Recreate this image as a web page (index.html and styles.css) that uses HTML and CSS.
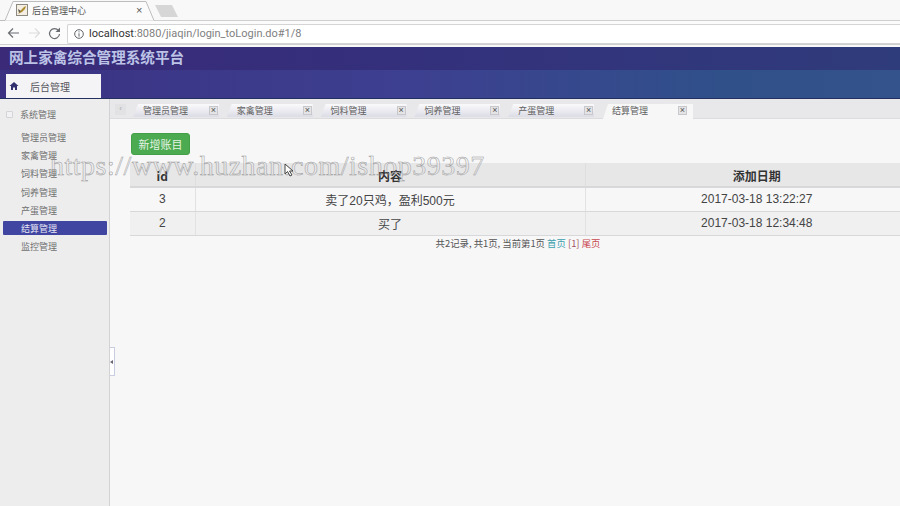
FILE: index.html
```html
<!DOCTYPE html>
<html lang="zh">
<head>
<meta charset="utf-8">
<title>后台管理中心</title>
<link rel="stylesheet" href="styles.css">
</head>
<body>
<div class="browser">
  <div class="tabstrip">
    <svg class="tabshape" width="182" height="22" viewBox="0 0 182 22">
      <path d="M0 20.5H5L13 1.5H146L154 20.5" fill="#fbfbfb" stroke="#bdbdbd" stroke-width="1"/>
      <path d="M155 5H172L178 17H161Z" fill="#d6d6d6"/>
    </svg>
    <svg class="favicon" width="12" height="12" viewBox="0 0 12 12">
      <rect x="0.5" y="0.5" width="11" height="11" fill="#f4efe2" stroke="#8c8a80"/>
      <path d="M2 10L6 5L8 3L10 2L9 5L6 8Z" fill="#b08c30"/>
      <path d="M2 5L5 7L3 9Z" fill="#5d5a4c"/>
    </svg>
    <span class="tabtitle">后台管理中心</span>
    <span class="tabclose">×</span>
  </div>
  <div class="toolbar">
    <svg class="navicons" width="62" height="16" viewBox="0 0 62 16">
      <path d="M13 8H3M7 3.500L2.500 8L7 12.500" fill="none" stroke="#6a6d72" stroke-width="1.200"/>
      <path d="M23 8H33M29 3.500L33.500 8L29 12.500" fill="none" stroke="#dcdcdc" stroke-width="1.200"/>
      <path d="M52.500 5.500A5 5 0 1 0 53.500 9" fill="none" stroke="#6a6d72" stroke-width="1.200"/>
      <path d="M54 2.500V7H49.500Z" fill="#6a6d72"/>
    </svg>
    <div class="omnibox">
      <svg class="infoicon" width="10" height="10" viewBox="0 0 10 10">
        <circle cx="5" cy="5" r="4.300" fill="none" stroke="#5f6368"/>
        <path d="M5 4.300V7.600M5 2.300V3.400" stroke="#5f6368"/>
      </svg>
      <span class="url"><b class="host">localhost</b>:8080/jiaqin/login_toLogin.do#1/8</span>
    </div>
  </div>
</div>

<header class="banner">
  <div class="brand">网上家禽综合管理系统平台</div>
  <nav class="topnav">
    <div class="topnav-item">
      <svg class="homeicon" width="10" height="10" viewBox="0 0 10 10">
        <path d="M5 1L0.500 5H2V9H4V6.500H6V9H8V5H9.500Z" fill="#33306f"/>
      </svg>
      <span>后台管理</span>
    </div>
  </nav>
</header>

<div class="workspace">
  <aside class="sidebar">
    <div class="side-title"><span class="side-check"></span>系统管理</div>
    <ul class="side-list">
      <li>管理员管理</li>
      <li>家禽管理</li>
      <li>饲料管理</li>
      <li>饲养管理</li>
      <li>产蛋管理</li>
      <li class="active">结算管理</li>
      <li>监控管理</li>
    </ul>
  </aside>
  <span class="collapse"><i></i></span>
  <main class="content">
    <div class="tabs">
      <span class="tabs-scroll">‹</span>
      <div class="tab"><span>管理员管理</span><em>×</em></div>
      <div class="tab"><span>家禽管理</span><em>×</em></div>
      <div class="tab"><span>饲料管理</span><em>×</em></div>
      <div class="tab"><span>饲养管理</span><em>×</em></div>
      <div class="tab"><span>产蛋管理</span><em>×</em></div>
      <div class="tab current"><span>结算管理</span><em>×</em></div>
    </div>
    <div class="panel">
      <button class="add-btn" type="button">新增账目</button>
      <div class="table-clip">
        <table class="grid">
          <thead>
            <tr><th class="c-id">id</th><th class="c-text">内容</th><th class="c-date">添加日期</th></tr>
          </thead>
          <tbody>
            <tr><td>3</td><td>卖了20只鸡，盈利500元</td><td>2017-03-18 13:22:27</td></tr>
            <tr class="alt"><td>2</td><td>买了</td><td>2017-03-18 12:34:48</td></tr>
          </tbody>
        </table>
      </div>
      <p class="pager">共2记录, 共1页, 当前第1页 <a class="first">首页</a> <a class="num">[1]</a> <a class="last">尾页</a></p>
    </div>
  </main>
</div>

<div class="watermark">https://www.huzhan.com/ishop39397</div>
<svg class="cursor" width="10" height="14" viewBox="0 0 10 14">
  <path d="M1 1L1 11L3.500 8.500L6 13L8 12L5.500 8L9 8Z" fill="#fff" stroke="#444"/>
</svg>
</body>
</html>
```

FILE: styles.css
```css
* { box-sizing: border-box; }
html, body { margin: 0; height: 100%; }
body {
  width: 900px;
  height: 506px;
  overflow: hidden;
  background: #f7f7f8;
  font-family: "Noto Sans CJK SC", "Liberation Sans", sans-serif;
  color: #444;
  display: flex;
  flex-direction: column;
  position: relative;
}

/* Browser chrome */
.browser { height: 47px; background: #f8f8f8; flex: none; }
.tabstrip {
  height: 21px;
  position: relative;
  display: flex;
  align-items: center;
  padding-left: 16px;
  border-bottom: 1px solid #cfcfcf;
}
.tabshape { position: absolute; left: 0; top: 0; }
.favicon { position: relative; margin-top: -1px; }
.tabtitle { position: relative; margin-left: 4px; font-size: 9px; color: #555; width: 104px; }
.tabclose { position: relative; font-size: 11px; color: #555; font-family: "Liberation Sans", sans-serif; }
.toolbar {
  height: 24px;
  display: flex;
  align-items: center;
  padding-left: 6px;
  border-bottom: 1px solid #cfcfcf;
  background: #fbfbfb;
}
.navicons { flex: none; }
.omnibox {
  flex: 1;
  height: 20px;
  margin-left: -1px;
  margin-top: 2px;
  border: 1px solid #d4d4d4;
  border-right: 0;
  border-radius: 2px 0 0 2px;
  background: #fff;
  display: flex;
  align-items: center;
  padding-left: 6px;
}
.url {
  margin-left: 5px;
  font-family: Roboto, "Liberation Sans", sans-serif;
  font-size: 11px;
  color: #808080;
  white-space: nowrap;
}
.host { font-weight: 400; color: #333; }

/* Banner */
.banner {
  height: 52px;
  flex: none;
  display: flex;
  flex-direction: column;
  background: linear-gradient(90deg, #3a2a78 0%, #34307c 45%, #2f3c7b 100%);
}
.brand {
  height: 23px;
  padding-left: 9px;
  font-size: 14.600px;
  line-height: 19px;
  font-weight: 700;
  color: #bcc3e6;
  white-space: nowrap;
}
.topnav {
  flex: 1;
  padding: 4px 0 0 6px;
  background: linear-gradient(90deg, #3b3282 0%, #3d3f90 45%, #30508a 80%, #34528c 100%);
  border-bottom: 1px solid #23305f;
}
.topnav-item {
  width: 95px;
  height: 24px;
  background: #f4f4f6;
  display: flex;
  align-items: center;
  padding-left: 3px;
  gap: 11px;
  font-size: 10px;
  color: #55555c;
}

/* Workspace */
.workspace { flex: 1; display: flex; position: relative; min-height: 0; }
.sidebar {
  width: 110px;
  flex: none;
  background: #ededee;
  border-right: 1px solid #d2d2d4;
  padding-top: 7px;
}
.side-title {
  display: flex;
  align-items: center;
  height: 16px;
  padding-left: 6px;
  gap: 7px;
  font-size: 9px;
  color: #707070;
}
.side-check {
  width: 7px;
  height: 7px;
  border: 1px solid #d4d4d8;
  border-radius: 1px;
  background: #f2f2f4;
}
.side-list {
  list-style: none;
  margin: 8px 0 0;
  padding: 0 2px 0 3px;
}
.side-list li {
  height: 14px;
  margin-bottom: 4.200px;
  line-height: 15px;
  padding-left: 18px;
  font-size: 9px;
  color: #707070;
  white-space: nowrap;
}
.side-list li.active {
  background: #3f45a0;
  color: #e6e6f5;
  border-radius: 1px;
}
.collapse {
  position: absolute;
  left: 110px;
  top: 248px;
  width: 5px;
  height: 29px;
  background: #fff;
  border: 1px solid #c9cde4;
  border-left: 0;
  display: flex;
  align-items: center;
}
.collapse i {
  width: 0;
  height: 0;
  border: 2px solid transparent;
  border-left: 0;
  border-right: 3px solid #667;
}

.content { flex: 1; min-width: 0; display: flex; flex-direction: column; }
.tabs {
  height: 20px;
  flex: none;
  display: flex;
  align-items: flex-end;
  padding-left: 5px;
  background: #e8e8ea;
  border-bottom: 1px solid #dcdcde;
}
.tabs-scroll {
  width: 11px;
  height: 11px;
  margin-bottom: 3px;
  margin-right: 7px;
  background: #e2e2e4;
  border-radius: 1px;
  font-size: 8px;
  line-height: 10px;
  text-align: center;
  color: #aaa;
  font-family: "Liberation Sans", sans-serif;
}
.tab {
  width: 86px;
  height: 13px;
  margin-right: 7.800px;
  margin-bottom: 1px;
  padding-left: 10px;
  display: flex;
  align-items: center;
  justify-content: space-between;
  font-size: 9px;
  color: #606060;
  white-space: nowrap;
  background: linear-gradient(#fafafc, #dcdce6);
  clip-path: polygon(5px 0, 100% 0, 100% 100%, 0 100%);
}
.tab em {
  width: 9px;
  height: 9px;
  flex: none;
  margin-right: 1px;
  border: 1px solid #c8c8cc;
  background: #e4e4e6;
  color: #555;
  font-style: normal;
  font-size: 9px;
  line-height: 7px;
  text-align: center;
  font-family: "Liberation Sans", sans-serif;
}
.tab.current {
  width: 90px;
  margin-left: 1px;
  padding-left: 9px;
  background: #f7f7f8;
  height: 15px;
  margin-bottom: -1px;
  padding-bottom: 2px;
}
.tab.current em { margin-right: 6px; }

.panel { flex: 1; position: relative; min-width: 0; }
.add-btn {
  display: block;
  width: 59px;
  height: 22px;
  margin: 14px 0 8px 21px;
  padding: 0;
  border: 1px solid #44a048;
  border-radius: 3px;
  background: #4caa50;
  color: #e4f3e4;
  font: 11px "Noto Sans CJK SC", sans-serif;
}
.table-clip { margin-left: 20px; overflow: hidden; }
.grid {
  width: 799px;
  border-collapse: collapse;
  table-layout: fixed;
  font-size: 12px;
  color: #444;
}
.grid th {
  height: 24px;
  padding: 2px 0 0;
  background: #e7e7e8;
  border-bottom: 2px solid #d8d8da;
  border-right: 1px solid #dedee0;
  font-size: 12px;
  color: #333;
}
.grid td {
  height: 24px;
  padding: 0;
  text-align: center;
  border-bottom: 1px solid #d8d8da;
  border-right: 1px solid #e2e2e4;
  font-family: "Liberation Sans", "Noto Sans CJK SC", sans-serif;
  font-size: 12px;
}
.grid .alt td { background: #f0f0f1; }
.c-id { width: 65px; }
.c-text { width: 390px; }
.pager {
  margin: 1px 0 0;
  text-align: center;
  padding-left: 26px;
  font-size: 9.400px;
  line-height: 12px;
  color: #555;
}
.first { color: #3d9fae; }
.num { color: #a05060; }
.last { color: #c8474f; }

/* Overlay */
.watermark {
  position: absolute;
  left: 50px;
  top: 151px;
  font-family: "Liberation Serif", serif;
  font-size: 28px;
  line-height: 30px;
  letter-spacing: 0.500px;
  color: transparent;
  -webkit-text-stroke: 0.5px #9a9a9a;
  white-space: nowrap;
  pointer-events: none;
}
.cursor { position: absolute; left: 284px; top: 163px; }
```
